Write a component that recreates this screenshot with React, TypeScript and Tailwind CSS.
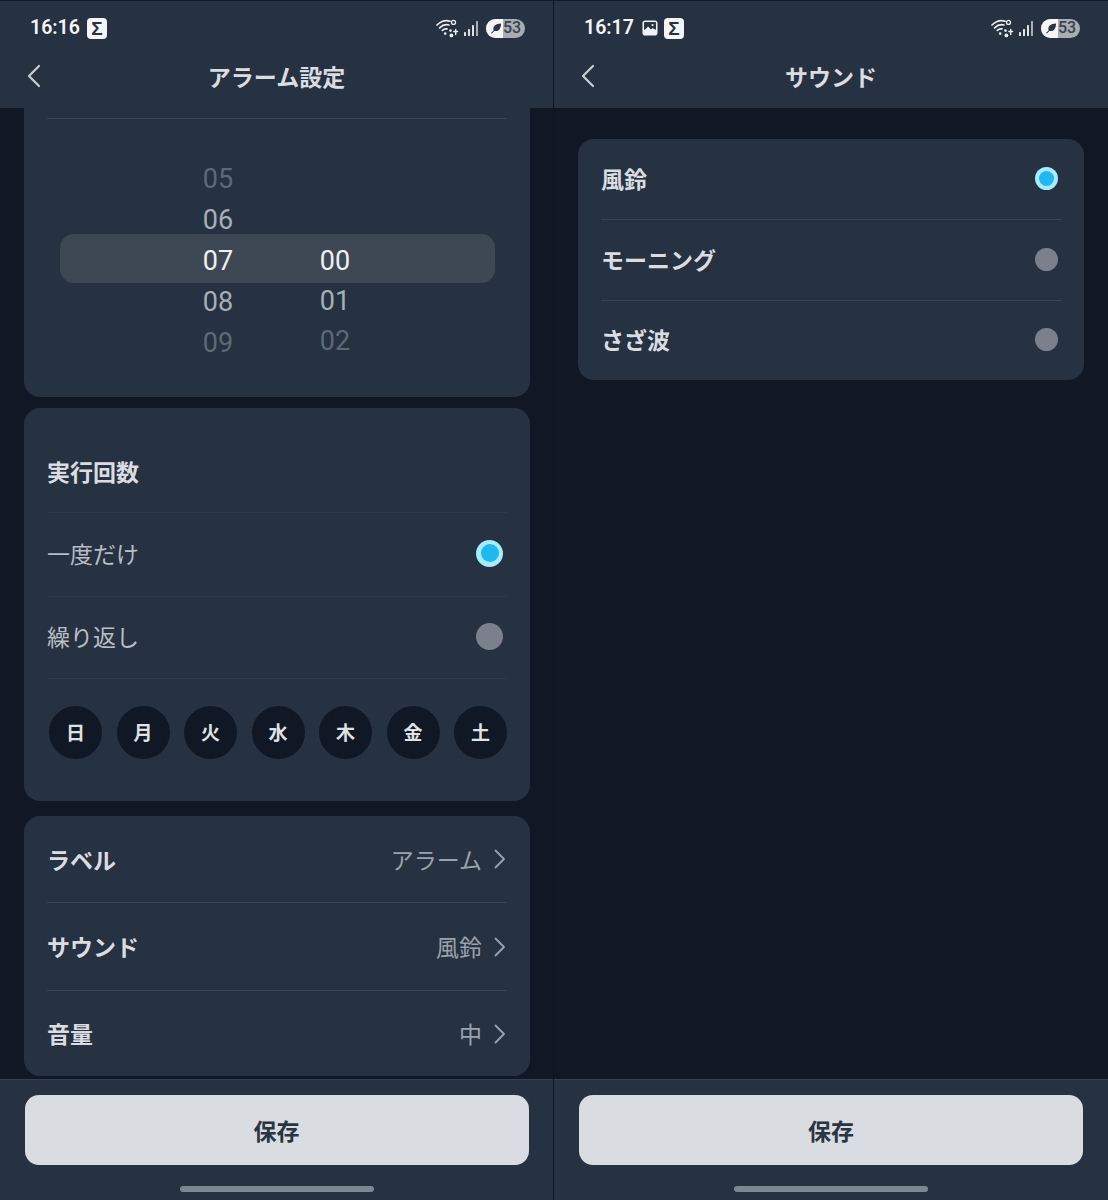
import { ReactNode } from "react";

const jp = "font-['Noto_Sans_CJK_JP','Noto_Sans',sans-serif]";

const SigmaBadge = () => (
  <span className="flex h-[21px] w-[20px] items-center justify-center rounded-[4px] bg-[#f4f5f6] font-['Liberation_Sans',sans-serif] text-[19px] leading-none font-bold text-[#263141]">
    Σ
  </span>
);

const PhotoBadge = () => (
  <svg width="16" height="16" viewBox="0 0 17 17" fill="none">
    <rect x="0.5" y="0.5" width="16" height="16" rx="3" fill="#f0f1f3" />
    <rect x="2.2" y="2.2" width="12.6" height="8" fill="#263141" />
    <path d="M2.2 11.5 L6.5 7 L9.5 10 L11.5 8.5 L14.8 11.5 V13 H2.2 Z" fill="#f0f1f3" />
    <circle cx="11.2" cy="5.4" r="1.2" fill="#f0f1f3" />
  </svg>
);

const StatusIcons = () => (
  <div className="flex items-center">
    <svg width="24" height="19" viewBox="0 0 24 19" fill="none" stroke="#eceef0" strokeLinecap="round">
      <path d="M1 6 C5.5 1.6 10.5 1 14 2.2" strokeWidth="1.7" />
      <path d="M3.6 8.8 C6.5 6 10 5.2 13 6" strokeWidth="1.7" />
      <path d="M6.3 11.4 C7.8 10 9.6 9.6 11 9.9" strokeWidth="1.7" />
      <circle cx="9.2" cy="14.6" r="1.3" fill="#eceef0" stroke="none" />
      <circle cx="17.5" cy="3.4" r="2" strokeWidth="1.3" />
      <circle cx="14.5" cy="11.6" r="1.3" fill="#eceef0" stroke="none" />
      <circle cx="15.4" cy="16.4" r="1.9" fill="#eceef0" stroke="none" />
      <path d="M19.7 10.5 V15.5 M17.8 12.5 H21.6" strokeWidth="1.4" />
    </svg>
    <svg className="ml-[3px]" width="17" height="18" viewBox="0 0 17 18" fill="#dfe2e5">
      <rect x="1" y="13" width="2" height="4" rx="0.6" />
      <rect x="5" y="10" width="2" height="7" rx="0.6" />
      <rect x="9" y="6" width="2" height="11" rx="0.6" />
      <rect x="13" y="2" width="2" height="15" rx="0.6" fill="#a9afb6" />
    </svg>
    <div className="relative ml-[6px] flex h-[19px] w-[39px] items-center overflow-hidden rounded-full bg-[#a8adb3]">
      <div className="absolute top-0 bottom-0 left-0 w-[17px] bg-[#f4f5f6]" />
      <svg className="relative ml-[4px]" width="12" height="12" viewBox="0 0 13 13">
        <path d="M1 12 C2 11 3 10 4 9 C2.5 5 6 1.5 12 1.5 C12 7 9 11 5 9.5 L2 12.5 Z" fill="#2c3543" />
      </svg>
      <span className="relative ml-[1px] font-['Roboto',sans-serif] text-[16px] leading-none font-medium text-[#39424f]">53</span>
    </div>
  </div>
);

const BackIcon = () => (
  <svg width="14" height="24" viewBox="0 0 14 24" fill="none" stroke="#c9ced3" strokeWidth="2.2" strokeLinecap="round" strokeLinejoin="round">
    <path d="M12 2 L2 12 L12 22" />
  </svg>
);

const Chevron = () => (
  <svg width="12" height="20" viewBox="0 0 12 20" fill="none" stroke="#9aa2ac" strokeWidth="1.8" strokeLinecap="round" strokeLinejoin="round">
    <path d="M1.5 1.5 L10 10 L1.5 18.5" />
  </svg>
);

const Header = ({ time, title, badges, gap }: { time: string; title: string; badges: ReactNode; gap: string }) => (
  <div className="h-[108px] shrink-0 border-t border-[#131a27] bg-[#263141]">
    <div className="flex h-[54px] items-center justify-between pr-[28px] pl-[30px]">
      <div className={`flex items-center ${gap}`}>
        <span className="font-['Roboto',sans-serif] text-[19.5px] leading-none font-semibold text-[#f4f5f6]">{time}</span>
        {badges}
      </div>
      <StatusIcons />
    </div>
    <div className="relative flex h-[42px] items-center justify-center">
      <span className="absolute top-[9px] left-[27px]">
        <BackIcon />
      </span>
      <span className={`${jp} text-[23px] leading-none font-bold text-[#d9dde1]`}>{title}</span>
    </div>
  </div>
);

const Footer = () => (
  <div className="flex h-[121px] shrink-0 flex-col items-center border-t border-[#344050] bg-[#263141]">
    <button className={`${jp} mt-[15px] flex h-[70px] w-[504px] items-center justify-center rounded-[14px] bg-[#d9dce0] text-[23px] font-bold text-[#2a3442]`}>
      保存
    </button>
    <div className="mt-[21px] h-[6px] w-[194px] rounded-full bg-[#7b8791]" />
  </div>
);

const Radio = ({ on, size }: { on?: boolean; size: "lg" | "sm" }) => (
  <span
    className={`flex items-center justify-center rounded-full ${size === "lg" ? "h-[27px] w-[27px]" : "h-[23px] w-[23px]"} ${on ? "bg-[#a5ecfd]" : "bg-[#7b808c]"}`}
  >
    {on && <span className={`rounded-full bg-[#1fb8f0] ${size === "lg" ? "h-[18px] w-[18px]" : "h-[15px] w-[15px]"}`} />}
  </span>
);

const hours = [
  { v: "05", c: "text-[#5e6976]" },
  { v: "06", c: "text-[#a6afb8]" },
  { v: "07", c: "text-[#eef0f2]" },
  { v: "08", c: "text-[#a6afb8]" },
  { v: "09", c: "text-[#5e6976]" },
];

const minutes = [
  { v: "00", c: "text-[#eef0f2]" },
  { v: "01", c: "text-[#a6afb8]" },
  { v: "02", c: "text-[#5e6976]" },
];

const TimeCard = () => (
  <div className="-mt-[20px] h-[309px] w-[506px] rounded-[16px] bg-[#263141] px-[23px] pt-[30px]">
    <div className="h-px w-[460px] bg-[#3a4655]" />
    <div className="relative mt-[39px] ml-[13px] h-[205px] w-[435px]">
      <div className="absolute top-[76px] left-0 h-[49px] w-[435px] rounded-[14px] bg-[#3e4855]" />
      <div className="relative flex pt-px pl-[128px] font-['Roboto',sans-serif] text-[27px] leading-none">
        <div className="flex w-[60px] flex-col items-center">
          {hours.map((h) => (
            <span key={h.v} className={`flex h-[41px] items-center ${h.c}`}>
              {h.v}
            </span>
          ))}
        </div>
        <div className="ml-[57px] flex w-[60px] flex-col items-center pt-[82px]">
          {minutes.map((m) => (
            <span key={m.v} className={`flex h-[40px] items-center ${m.c}`}>
              {m.v}
            </span>
          ))}
        </div>
      </div>
    </div>
  </div>
);

const days = ["日", "月", "火", "水", "木", "金", "土"];

const RepeatCard = () => (
  <div className="mt-[11px] h-[393px] w-[506px] rounded-[16px] bg-[#263141] px-[23px]">
    <div className={`${jp} flex h-[105px] items-center border-b border-[#2e3a49] pt-[23px] text-[23px] font-bold text-[#d9dde1]`}>実行回数</div>
    <div className={`${jp} flex h-[84px] items-center justify-between border-b border-[#2e3a49] pr-[4px] pb-[3px] text-[23px] text-[#b8bec5]`}>
      一度だけ
      <Radio on size="lg" />
    </div>
    <div className={`${jp} flex h-[82px] items-center justify-between border-b border-[#2e3a49] pr-[4px] pb-[2px] text-[23px] text-[#b8bec5]`}>
      繰り返し
      <Radio size="lg" />
    </div>
    <div className="mt-[27px] flex justify-between pl-[2px]">
      {days.map((d) => (
        <span key={d} className={`${jp} flex h-[53px] w-[53px] items-center justify-center rounded-full bg-[#111825] text-[19px] font-bold text-[#dfe2e5]`}>
          {d}
        </span>
      ))}
    </div>
  </div>
);

const settings = [
  { label: "ラベル", value: "アラーム", h: "h-[87px]" },
  { label: "サウンド", value: "風鈴", h: "h-[88px]" },
  { label: "音量", value: "中", h: "h-[85px]" },
];

const SettingsCard = () => (
  <div className="mt-[15px] w-[506px] rounded-[16px] bg-[#263141] px-[23px]">
    {settings.map((s, i) => (
      <div key={s.label} className={`${jp} flex items-center justify-between ${s.h} ${i < 2 ? "border-b border-[#3a4655]" : ""}`}>
        <span className="text-[23px] font-bold text-[#d9dde1]">{s.label}</span>
        <span className="flex items-center gap-[12px] pr-px text-[23px] text-[#9aa3ad]">
          {s.value}
          <Chevron />
        </span>
      </div>
    ))}
  </div>
);

const sounds = [
  { name: "風鈴", on: true },
  { name: "モーニング", on: false },
  { name: "さざ波", on: false },
];

const SoundCard = () => (
  <div className="mt-[31px] w-[506px] rounded-[16px] bg-[#263141] px-[23px]">
    {sounds.map((s, i) => (
      <div
        key={s.name}
        className={`${jp} flex items-center justify-between pr-[3px] pb-[2px] text-[23px] font-bold text-[#d9dde1] ${i < 2 ? "h-[81px] border-b border-[#3a4655]" : "h-[79px]"}`}
      >
        {s.name}
        <Radio on={s.on} size="sm" />
      </div>
    ))}
  </div>
);

export default function App() {
  return (
    <div className="flex h-[1200px] w-[1108px] bg-[#111825]">
      <div className="flex h-full w-[554px] flex-col border-r border-[#0e1520]">
        <Header time="16:16" title="アラーム設定" gap="gap-[7px]" badges={<SigmaBadge />} />
        <div className="min-h-0 flex-1 overflow-hidden pl-[24px]">
          <TimeCard />
          <RepeatCard />
          <SettingsCard />
        </div>
        <Footer />
      </div>
      <div className="flex h-full w-[554px] flex-col">
        <Header
          time="16:17"
          title="サウンド"
          gap="gap-[8px]"
          badges={
            <span className="flex items-center gap-[6px]">
              <PhotoBadge />
              <SigmaBadge />
            </span>
          }
        />
        <div className="min-h-0 flex-1 overflow-hidden pl-[24px]">
          <SoundCard />
        </div>
        <Footer />
      </div>
    </div>
  );
}
